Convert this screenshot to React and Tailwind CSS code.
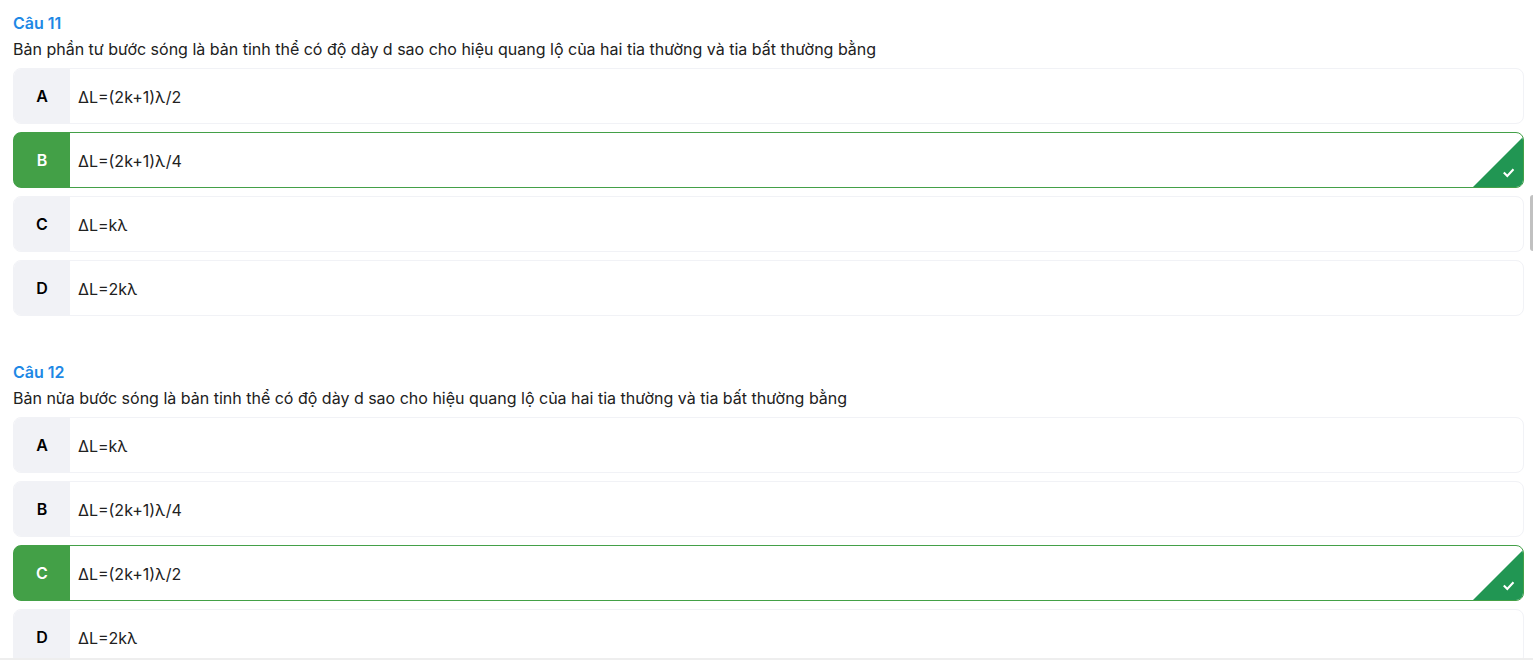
const questions = [
  {
    id: 11,
    text: 'Bản phần tư bước sóng là bản tinh thể có độ dày d sao cho hiệu quang lộ của hai tia thường và tia bất thường bằng',
    answers: ['ΔL=(2k+1)λ/2', 'ΔL=(2k+1)λ/4', 'ΔL=kλ', 'ΔL=2kλ'],
    correct: 1,
  },
  {
    id: 12,
    text: 'Bản nửa bước sóng là bản tinh thể có độ dày d sao cho hiệu quang lộ của hai tia thường và tia bất thường bằng',
    answers: ['ΔL=kλ', 'ΔL=(2k+1)λ/4', 'ΔL=(2k+1)λ/2', 'ΔL=2kλ'],
    correct: 2,
  },
];

function Answer({ letter, text, correct }) {
  return (
    <li
      className={`relative flex h-14 overflow-hidden rounded-lg border ${
        correct ? 'border-[#43a047] bg-[linear-gradient(to_right,#43a047_56px,white_56px)]' : 'border-[#f1f2f6]'
      }`}
    >
      <span
        className={`flex w-14 shrink-0 items-center justify-center font-semibold ${
          correct ? 'bg-[#43a047] text-white' : 'bg-[#f1f2f6] text-black'
        }`}
      >
        {letter}
      </span>
      <span className="flex items-center px-2 pt-0.5">{text}</span>
      {correct && (
        <svg className="absolute right-0 bottom-0 size-[50px]" viewBox="0 0 50 50" aria-hidden="true">
          <path d="M50 0V50H0Z" fill="#219653" />
          <path d="M30.8 35.5L34.3 39L40.5 32.3" fill="none" stroke="white" strokeWidth="2.1" />
        </svg>
      )}
    </li>
  );
}

function Question({ id, text, answers, correct }) {
  return (
    <section>
      <h2 className="leading-6 font-semibold text-[#1e88e5]">Câu {id}</h2>
      <p className="pt-0.5 leading-6">{text}</p>
      <ol className="mt-[7px] flex flex-col gap-2">
        {answers.map((answer, i) => (
          <Answer key={answer} letter={'ABCD'[i]} text={answer} correct={i === correct} />
        ))}
      </ol>
    </section>
  );
}

export default function App() {
  return (
    <div className="relative h-screen overflow-hidden bg-white font-['Inter',sans-serif] text-base text-[#212121]">
      <main className="flex flex-col gap-11 pt-[11px] pr-[9px] pl-[13px]">
        {questions.map((q) => (
          <Question key={q.id} {...q} />
        ))}
      </main>
      <div className="absolute top-[195px] right-0 h-14 w-[3px] rounded-l-sm bg-[#c1c1c1]" />
      <div className="absolute inset-x-0 bottom-0 h-0.5 bg-[#eeeeee]" />
    </div>
  );
}
